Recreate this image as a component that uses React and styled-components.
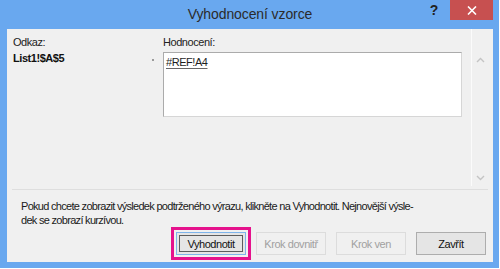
import React from 'react';
import styled, { createGlobalStyle } from 'styled-components';

const GlobalStyle = createGlobalStyle`
  html, body {
    margin: 0;
    padding: 0;
    background: #ffffff;
  }
  body {
    font-family: "Liberation Sans", Arial, sans-serif;
    font-size: 11px;
    letter-spacing: -0.45px;
    color: #1e1e1e;
  }
`;

const Window = styled.div`
  width: 499px;
  height: 268px;
  box-sizing: border-box;
  background: #69a8ef;
  padding: 0 6px 6px 7px;
  display: flex;
  flex-direction: column;
`;

const TitleBar = styled.div`
  height: 29px;
  display: grid;
  grid-template-columns: 1fr auto 1fr;
  align-items: start;
`;

const Title = styled.div`
  grid-column: 2;
  padding-top: 6px;
  font-size: 14px;
  letter-spacing: -0.1px;
  color: #2b2b2b;
`;

const TitleControls = styled.div`
  grid-column: 3;
  justify-self: end;
  display: flex;
  align-items: flex-start;
`;

const HelpButton = styled.div`
  width: 16px;
  margin-right: 8px;
  padding-top: 2px;
  font-weight: bold;
  font-size: 14px;
  letter-spacing: 0;
  color: #222;
  text-align: center;
`;

const CloseButton = styled.div`
  width: 43px;
  height: 20px;
  background: #c75050;
  display: flex;
  align-items: center;
  justify-content: center;
`;

const Panel = styled.div`
  flex: 1;
  background: #f0f0f0;
  display: flex;
  flex-direction: column;
  padding: 0 5px;
`;

const TopArea = styled.div`
  height: 160px;
  display: grid;
  grid-template-columns: 140px 11px 299px 9px 17px;
`;

const RefColumn = styled.div`
  padding: 7px 0 0 1px;
  display: flex;
  flex-direction: column;
  gap: 3px;
`;

const Label = styled.div`
  line-height: 13px;
  color: #222;
`;

const RefValue = styled.div`
  line-height: 13px;
  font-weight: bold;
  color: #111;
`;

const DotColumn = styled.div`
  padding-top: 30px;
  display: flex;
  justify-content: flex-start;
`;

const Dot = styled.span`
  width: 2px;
  height: 2px;
  background: #9a9a9a;
`;

const EvalColumn = styled.div`
  padding-top: 7px;
  display: flex;
  flex-direction: column;
  gap: 3px;
`;

const EvalBox = styled.div`
  height: 65px;
  box-sizing: border-box;
  background: #fff;
  border: 1px solid #ababab;
  border-right-color: #d6d6d6;
  border-bottom-color: #d6d6d6;
  padding: 3px 2px;
`;

const Underlined = styled.span`
  color: #1e1e1e;
  text-decoration: underline;
  text-decoration-color: #666;
  text-underline-offset: 2px;
`;

const ScrollBar = styled.div`
  grid-column: 5;
  height: 157px;
  box-sizing: border-box;
  border-left: 1px solid #fbfbfb;
  display: flex;
  flex-direction: column;
  justify-content: space-between;
  align-items: center;
  padding: 28px 0 5px;
`;

const Separator = styled.div`
  height: 1px;
  background: #dedede;
`;

const Description = styled.p`
  margin: 9px 0 0 9px;
  line-height: 14px;
  letter-spacing: -0.7px;
  color: #1a1a1a;
`;

const ButtonRow = styled.div`
  display: flex;
  justify-content: flex-end;
  gap: 10px;
  margin-top: 5px;
  padding-right: 2px;
`;

const Highlight = styled.div`
  margin: -5px;
  padding: 2px;
  border: 3px solid #e5128c;
`;

const Button = styled.div`
  width: 70px;
  height: 23px;
  box-sizing: border-box;
  display: flex;
  align-items: center;
  justify-content: center;
  background: ${p => (p.disabled ? '#f0f0f0' : '#e5e5e5')};
  border: 1px solid ${p => (p.disabled ? '#dcdcdc' : p.focused ? '#7eb4ea' : '#adadad')};
  color: ${p => (p.disabled ? '#a0a0a0' : '#111')};
  padding: ${p => (p.focused ? '2px' : '0')};
`;

const FocusInner = styled.div`
  width: 100%;
  height: 100%;
  box-sizing: border-box;
  border: 1px solid #5c5c5c;
  display: flex;
  align-items: center;
  justify-content: center;
`;

const Chevron = ({ up }) => (
  <svg width="9" height="6" viewBox="0 0 9 6">
    <path
      d={up ? 'M1 5 L4.5 1.5 L8 5' : 'M1 1 L4.5 4.5 L8 1'}
      fill="none"
      stroke="#c4c4c4"
      strokeWidth="1.4"
    />
  </svg>
);

export default function App() {
  return (
    <>
      <GlobalStyle />
      <Window>
        <TitleBar>
          <Title>Vyhodnocení vzorce</Title>
          <TitleControls>
            <HelpButton>?</HelpButton>
            <CloseButton>
              <svg width="10" height="9" viewBox="0 0 10 9">
                <path d="M1 0.5 L9 8.5 M9 0.5 L1 8.5" stroke="#fff" strokeWidth="1.6" />
              </svg>
            </CloseButton>
          </TitleControls>
        </TitleBar>
        <Panel>
          <TopArea>
            <RefColumn>
              <Label>Odkaz:</Label>
              <RefValue>List1!$A$5</RefValue>
            </RefColumn>
            <DotColumn>
              <Dot />
            </DotColumn>
            <EvalColumn>
              <Label>Hodnocení:</Label>
              <EvalBox>
                <Underlined>#REF!A4</Underlined>
              </EvalBox>
            </EvalColumn>
            <ScrollBar>
              <Chevron up />
              <Chevron />
            </ScrollBar>
          </TopArea>
          <Separator />
          <Description>
            Pokud chcete zobrazit výsledek podtrženého výrazu, klikněte na Vyhodnotit. Nejnovější výsle-
            <br />
            dek se zobrazí kurzívou.
          </Description>
          <ButtonRow>
            <Highlight>
              <Button focused>
                <FocusInner>Vyhodnotit</FocusInner>
              </Button>
            </Highlight>
            <Button disabled>Krok dovnitř</Button>
            <Button disabled>Krok ven</Button>
            <Button>Zavřít</Button>
          </ButtonRow>
        </Panel>
      </Window>
    </>
  );
}
